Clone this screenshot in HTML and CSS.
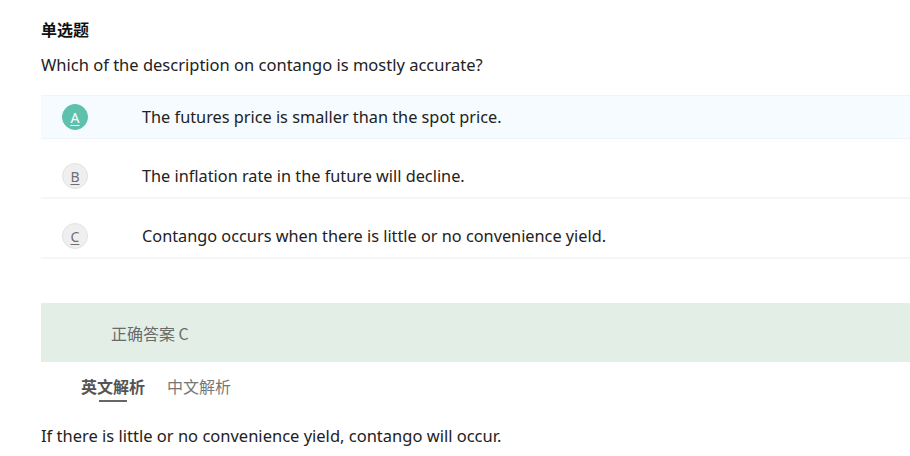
FILE: index.html
```html
<!DOCTYPE html>
<html lang="zh">
<head>
<meta charset="utf-8">
<link rel="stylesheet" href="styles.css">
</head>
<body>
<div class="page">
  <div class="type">单选题</div>
  <div class="question">Which of the description on contango is mostly accurate?</div>
  <ul class="options">
    <li class="option active"><span class="badge">A</span><span class="opt-text">The futures price is smaller than the spot price.</span></li>
    <li class="option"><span class="badge">B</span><span class="opt-text">The inflation rate in the future will decline.</span></li>
    <li class="option"><span class="badge">C</span><span class="opt-text">Contango occurs when there is little or no convenience yield.</span></li>
  </ul>
  <div class="answer">正确答案 C</div>
  <div class="tabs">
    <span class="tab current">英文解析</span>
    <span class="tab">中文解析</span>
  </div>
  <div class="explain">If there is little or no convenience yield, contango will occur.</div>
</div>
</body>
</html>
```

FILE: styles.css
```css
html, body {
  margin: 0;
  padding: 0;
  background: #fff;
}
body {
  font-family: "Noto Sans", "Noto Sans CJK SC", sans-serif;
  color: #222;
  overflow: hidden;
}
.page {
  padding: 18px 0 0 41px;
}
.type {
  font-family: "Noto Sans CJK SC", sans-serif;
  font-weight: 700;
  font-size: 16px;
  line-height: 22px;
  color: #111;
}
.question {
  margin-top: 13px;
  font-size: 16.5px;
  line-height: 24px;
  color: #222;
}
.options {
  list-style: none;
  margin: 18px 0 0 0;
  padding: 0;
}
.option {
  display: flex;
  align-items: center;
  height: 42px;
  border-bottom: 2px solid #f5f6f7;
  margin-bottom: 16px;
}
.option.active {
  background: #f5fbfe;
  border-top: 1px solid #eef4f8;
  border-bottom: 1px solid #eef4f8;
  margin-bottom: 16px;
}
.badge {
  box-sizing: border-box;
  width: 26px;
  height: 26px;
  margin-left: 21px;
  border-radius: 50%;
  background: #efefef;
  border: 1px solid #e2e2e2;
  display: flex;
  align-items: center;
  justify-content: center;
  font-size: 14px;
  color: #6f6f6f;
  text-decoration: underline;
  text-underline-offset: 2px;
}
.option.active .badge {
  background: #5dc1ab;
  border-color: #5dc1ab;
  color: #fff;
}
.opt-text {
  margin-left: 54px;
  font-size: 16.3px;
  color: #222;
}
.answer {
  margin-top: 44px;
  height: 59px;
  background: #e3efe6;
  display: flex;
  align-items: center;
  padding-left: 70px;
  font-family: "Noto Sans CJK SC", sans-serif;
  font-size: 16px;
  color: #6a6a6a;
}
.tabs {
  display: flex;
  align-items: flex-start;
  gap: 22px;
  padding-left: 40px;
  margin-top: 13px;
}
.tab {
  font-family: "Noto Sans CJK SC", sans-serif;
  font-size: 16px;
  line-height: 22px;
  color: #777;
  position: relative;
}
.tab.current {
  font-weight: 700;
  color: #555;
}
.tab.current::after {
  content: "";
  position: absolute;
  left: 18px;
  width: 28px;
  bottom: -5px;
  height: 2px;
  background: #666;
}
.explain {
  margin-top: 27px;
  font-size: 16.5px;
  line-height: 24px;
  color: #222;
}
```
